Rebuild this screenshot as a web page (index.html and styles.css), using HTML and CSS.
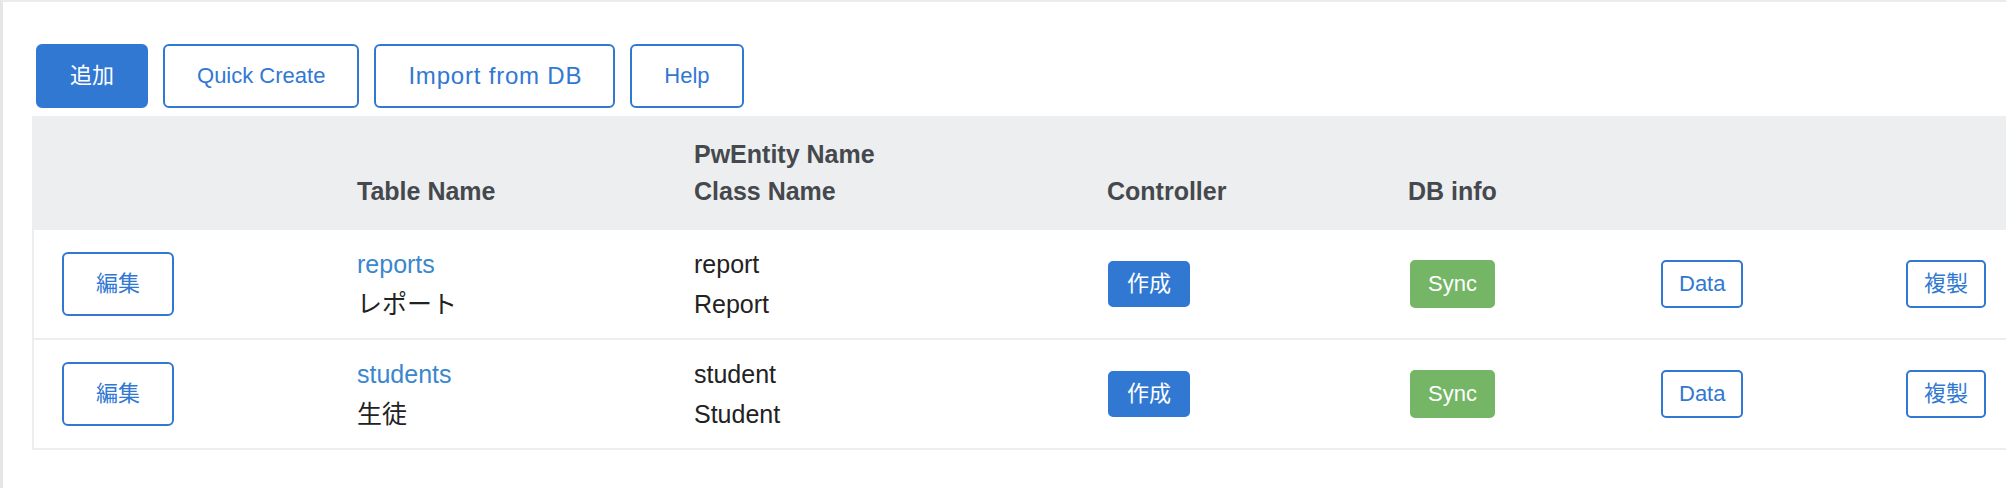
FILE: index.html
```html
<!DOCTYPE html>
<html lang="ja">
<head>
<meta charset="utf-8">
<title>PwEntity</title>
<link rel="stylesheet" href="styles.css">
</head>
<body>
<div class="page">
  <div class="toolbar">
    <button class="btn btn-solid">追加</button>
    <button class="btn btn-outline">Quick Create</button>
    <button class="btn btn-outline btn-wide">Import from DB</button>
    <button class="btn btn-outline">Help</button>
  </div>
  <table class="entities">
    <colgroup>
      <col class="c1"><col class="c2"><col class="c3"><col class="c4"><col class="c5"><col class="c6"><col class="c7">
    </colgroup>
    <thead>
      <tr>
        <th></th>
        <th>Table Name</th>
        <th>PwEntity Name<br>Class Name</th>
        <th>Controller</th>
        <th>DB info</th>
        <th></th>
        <th></th>
      </tr>
    </thead>
    <tbody>
      <tr>
        <td class="first"><button class="btn btn-outline">編集</button></td>
        <td class="txt"><a class="link" href="#">reports</a><br>レポート</td>
        <td class="txt">report<br>Report</td>
        <td><button class="sbtn sbtn-primary">作成</button></td>
        <td><button class="sbtn sbtn-success">Sync</button></td>
        <td><button class="sbtn sbtn-outline">Data</button></td>
        <td><button class="sbtn sbtn-outline">複製</button></td>
      </tr>
      <tr>
        <td class="first"><button class="btn btn-outline">編集</button></td>
        <td class="txt"><a class="link" href="#">students</a><br>生徒</td>
        <td class="txt">student<br>Student</td>
        <td><button class="sbtn sbtn-primary">作成</button></td>
        <td><button class="sbtn sbtn-success">Sync</button></td>
        <td><button class="sbtn sbtn-outline">Data</button></td>
        <td><button class="sbtn sbtn-outline">複製</button></td>
      </tr>
    </tbody>
  </table>
</div>
</body>
</html>
```

FILE: styles.css
```css
html, body {
  margin: 0;
  padding: 0;
  background: #ffffff;
}

body {
  font-family: "Liberation Sans", Arial, "Noto Sans CJK JP", sans-serif;
  color: #222222;
  overflow: hidden;
}

.page {
  min-height: 100vh;
  box-sizing: border-box;
  border-top: 2px solid #ebebeb;
  border-left: 3px solid #e6e6e6;
  padding: 42px 0 0 29px;
}

.toolbar {
  display: flex;
  gap: 15px;
  margin-left: 4px;
  margin-bottom: 8px;
}

.btn {
  box-sizing: border-box;
  height: 64px;
  padding: 0 32px;
  border: 2px solid #3178d3;
  border-radius: 6px;
  font-family: "Liberation Sans", Arial, "Noto Sans CJK JP", sans-serif;
  font-size: 22px;
  line-height: 1;
  cursor: pointer;
}

.btn-solid {
  background: #3178d3;
  color: #ffffff;
}

.btn-outline {
  background: #ffffff;
  color: #3178d3;
}

.btn-wide {
  font-size: 24px;
  letter-spacing: 0.8px;
  padding: 0 31px 0 32px;
}

.entities {
  width: 1974px;
  table-layout: fixed;
  border-collapse: separate;
  border-spacing: 0;
  font-size: 25px;
}

.c1 { width: 325px; }
.c2 { width: 337px; }
.c3 { width: 413px; }
.c4 { width: 301px; }
.c5 { width: 253px; }
.c6 { width: 245px; }
.c7 { width: 100px; }

.entities thead th {
  background: #eceef0;
  color: #45484c;
  font-weight: bold;
  text-align: left;
  vertical-align: bottom;
  line-height: 37px;
  padding: 20px 0;
}

.entities tbody td {
  height: 108px;
  padding: 0;
  border-bottom: 2px solid #eeeeee;
  vertical-align: middle;
  line-height: 40px;
  white-space: nowrap;
}

.entities tbody td.first {
  border-left: 2px solid #eeeeee;
  padding-left: 28px;
}

.link {
  color: #3b87cb;
  text-decoration: none;
}

.sbtn {
  box-sizing: border-box;
  height: 48px;
  padding: 0 16px;
  border: 2px solid #3178d3;
  border-radius: 5px;
  font-family: "Liberation Sans", Arial, "Noto Sans CJK JP", sans-serif;
  font-size: 22px;
  line-height: 1;
  vertical-align: middle;
  cursor: pointer;
}

.sbtn-primary {
  height: 46px;
  padding: 0 17px;
  background: #3178d3;
  color: #ffffff;
  margin-left: 1px;
}

.sbtn-success {
  background: #74b566;
  border-color: #74b566;
  color: #ffffff;
  margin-left: 2px;
}

.sbtn-outline {
  background: #ffffff;
  color: #3178d3;
}
```
